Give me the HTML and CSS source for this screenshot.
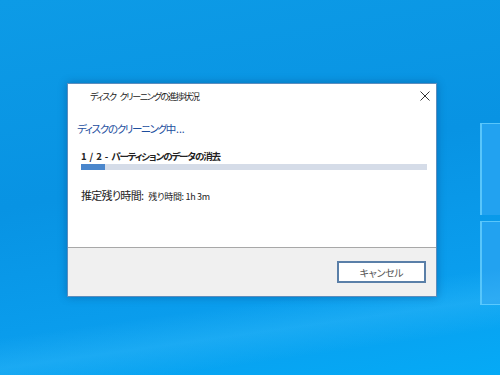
FILE: index.html
```html
<!DOCTYPE html>
<html lang="ja">
<head>
    <meta charset="UTF-8">
    <meta name="viewport" content="width=device-width, initial-scale=1.0">
    <title>ディスク クリーニングの進捗状況</title>
    <link rel="stylesheet" href="styles.css">
</head>
<body>
    <div class="desktop">
        <div class="logo-pane pane-top"></div>
        <div class="logo-pane pane-bottom"></div>
        <div class="streak"></div>

        <div class="dialog">
            <div class="titlebar">
                <span class="title">ディスク クリーニングの進捗状況</span>
                <svg class="close" width="10" height="10" viewBox="0 0 10 10">
                    <path d="M0.5 0.5 L9.5 9.5 M9.5 0.5 L0.5 9.5" stroke="#333" stroke-width="1" fill="none"/>
                </svg>
            </div>
            <div class="content">
                <div class="instruction">ディスクのクリーニング中<span class="dots">...</span></div>
                <div class="step">1 / 2 - パーティションのデータの消去</div>
                <div class="progress"><div class="progress-fill" style="width: 7%"></div></div>
                <div class="remaining">
                    <span class="label">推定残り時間:</span>
                    <span class="value">残り時間: 1h 3m</span>
                </div>
            </div>
            <div class="footer">
                <button type="button" class="cancel">キャンセル</button>
            </div>
        </div>
    </div>
</body>
</html>
```

FILE: styles.css
```css
/* Basic Reset */
* {
    margin: 0;
    padding: 0;
    box-sizing: border-box;
    font-family: "Noto Sans CJK JP", "Noto Sans", sans-serif;
    font-feature-settings: "palt";
}

body {
    width: 500px;
    height: 375px;
    overflow: hidden;
}

/* Desktop background */
.desktop {
    position: relative;
    width: 500px;
    height: 375px;
    padding: 83px 0 0 67px;
    background: linear-gradient(170deg, #0d9be6 0%, #0893e3 45%, #0a9ded 75%, #05aaf6 100%);
    overflow: hidden;
}

.streak {
    position: absolute;
    left: -50px;
    top: 300px;
    width: 650px;
    height: 60px;
    background: linear-gradient(180deg, rgba(80, 200, 255, 0) 0%, rgba(80, 200, 255, 0.25) 50%, rgba(80, 200, 255, 0) 100%);
    transform: rotate(-8deg);
}

/* Windows logo panes at right edge */
.logo-pane {
    position: absolute;
    left: 480px;
    width: 30px;
    background-color: #22a2f0;
    border-left: 2px solid #58c6fb;
    border-top: 1px solid #58c6fb;
}

.pane-top {
    top: 123px;
    height: 92px;
}

.pane-bottom {
    top: 221px;
    height: 84px;
    border-bottom: 1px solid #5ccaff;
}

/* Dialog window */
.dialog {
    position: relative;
    width: 370px;
    height: 214px;
    background-color: #fff;
    border: 1px solid #5c8dbd;
    box-shadow: 0 0 8px rgba(0, 40, 90, 0.35);
    display: flex;
    flex-direction: column;
}

.titlebar {
    height: 24px;
    display: flex;
    align-items: center;
    justify-content: space-between;
    padding: 0 5px 0 22px;
}

.title {
    font-size: 9px;
    color: #222;
    letter-spacing: -1.3px;
    word-spacing: 3px;
}

.close {
    margin-right: 1px;
}

.content {
    flex: 1;
    padding: 12px 9px 0 9px;
}

.instruction {
    font-size: 10.5px;
    color: #1d4e9e;
    line-height: 18px;
    letter-spacing: -1.3px;
}

.instruction .dots {
    letter-spacing: 0;
    margin-left: 1px;
}

.step {
    margin-top: 11px;
    margin-left: 4px;
    font-size: 9.5px;
    font-weight: bold;
    color: #222;
    line-height: 14px;
    letter-spacing: -1.1px;
    word-spacing: 3px;
}

.progress {
    margin: 1px 0 0 4px;
    height: 6px;
    background-color: #d5dce8;
}

.progress-fill {
    height: 100%;
    background-color: #4a86cc;
}

.remaining {
    margin-top: 17px;
    margin-left: 4px;
    display: flex;
    align-items: baseline;
    gap: 5px;
    color: #222;
}

.remaining .label {
    font-size: 11px;
    letter-spacing: -0.7px;
}

.remaining .value {
    font-size: 9px;
    letter-spacing: -0.3px;
}

/* Footer area */
.footer {
    height: 49px;
    background-color: #f0f0f0;
    border-top: 1px solid #a8a8a8;
    display: flex;
    align-items: center;
    justify-content: flex-end;
    padding: 0 10px 0 0;
}

.cancel {
    width: 89px;
    height: 22px;
    background-color: #fff;
    border: 2px solid #5a7fa8;
    font-size: 10px;
    color: #555;
    letter-spacing: -0.3px;
    cursor: pointer;
}
```
